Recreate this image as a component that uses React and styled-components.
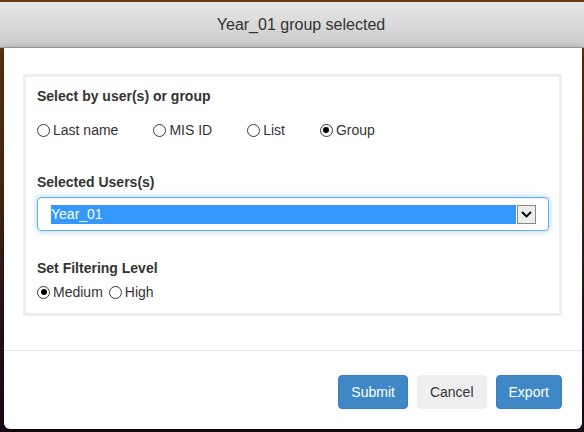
import React from 'react'
import styled, { createGlobalStyle } from 'styled-components'

const GlobalStyle = createGlobalStyle`
	html, body {
		margin: 0;
		padding: 0;
	}
	body {
		font-family: 'Liberation Sans', Arial, sans-serif;
		color: #333;
		background: linear-gradient(180deg, #6b3a10 0%, #4d2a16 45%, #2a1220 75%, #1c0a18 100%);
	}
`

const Screen = styled.div`
	width: 584px;
	height: 432px;
	padding-top: 2px;
	box-sizing: border-box;
	overflow: hidden;
`
const Dialog = styled.div`
	display: flex;
	flex-direction: column;
	height: 427px;
`
const Header = styled.div`
	display: flex;
	align-items: center;
	justify-content: center;
	height: 45px;
	padding-left: 18px;
	background: linear-gradient(180deg, #e5e5e5 0%, #dadada 50%, #c9c9c9 100%);
	border-bottom: 1px solid #a3a3a3;
	font-size: 16px;
	color: #333;
`
const Content = styled.div`
	flex: 1;
	display: flex;
	flex-direction: column;
	margin: 0 2px 0 4px;
	background: #fff;
	border-radius: 0 0 6px 6px;
	box-shadow: 0 3px 9px rgba(0, 0, 0, 0.5);
`
const Body = styled.div`
	padding: 26px 20px 34px 19px;
`
const Panel = styled.div`
	border: 3px solid #eee;
	padding: 9px 10px 11px 11px;
	display: flex;
	flex-direction: column;
`
const FieldLabel = styled.div`
	font-weight: bold;
	font-size: 14px;
	line-height: 20px;
	margin-top: ${p => p.$top || 0}px;
`
const RadioRow = styled.div`
	display: flex;
	align-items: center;
	gap: ${p => p.$gap}px;
	height: 20px;
	margin-top: ${p => p.$top}px;
	font-size: 14px;
`
const Option = styled.label`
	display: inline-flex;
	align-items: center;
	gap: 3px;
	line-height: 20px;
`
const Dot = styled.span`
	position: relative;
	width: 11px;
	height: 11px;
	border: 1px solid #3a3a3a;
	border-radius: 50%;
	background: #fff;
	box-sizing: content-box;
	&::after {
		content: '';
		display: ${p => (p.$on ? 'block' : 'none')};
		position: absolute;
		left: 2.5px;
		top: 2.5px;
		width: 6px;
		height: 6px;
		border-radius: 50%;
		background: #000;
	}
`
const SelectBox = styled.div`
	display: flex;
	align-items: center;
	height: 34px;
	box-sizing: border-box;
	margin-top: 5px;
	padding: 6px 12px 6px 13px;
	border: 1px solid #66afe9;
	border-radius: 4px;
	box-shadow: inset 0 1px 1px rgba(0, 0, 0, 0.075), 0 0 6px rgba(102, 175, 233, 0.6);
`
const Chosen = styled.div`
	flex: 1;
	height: 19px;
	line-height: 19px;
	background: #3399ff;
	color: #fff;
	font-size: 14px;
`
const ArrowBox = styled.div`
	width: 17px;
	height: 17px;
	margin-left: 1px;
	border: 1px solid #8a8a8a;
	background: #ececec;
	display: flex;
	align-items: center;
	justify-content: center;
`
const Footer = styled.div`
	display: flex;
	justify-content: flex-end;
	gap: 9px;
	padding: 24px 20px 19px;
	border-top: 1px solid #e5e5e5;
`
const Button = styled.button`
	height: 34px;
	padding: 6px 12px;
	font-family: 'Liberation Sans', Arial, sans-serif;
	font-size: 14px;
	line-height: 20px;
	border-radius: 4px;
	border: 1px solid ${p => (p.$primary ? '#3a83c3' : '#eeeeee')};
	background: ${p => (p.$primary ? '#3f88c8' : '#efefef')};
	color: ${p => (p.$primary ? '#fff' : '#333')};
	cursor: pointer;
`

const Radio = ({ label, on }) => (
	<Option>
		<Dot $on={on} />
		{label}
	</Option>
)

const App = () => {
	return (
		<Screen>
			<GlobalStyle />
			<Dialog>
				<Header>Year_01 group selected</Header>
				<Content>
					<Body>
						<Panel>
							<FieldLabel>Select by user(s) or group</FieldLabel>
							<RadioRow $top={14} $gap={35}>
								<Radio label="Last name" />
								<Radio label="MIS ID" />
								<Radio label="List" />
								<Radio label="Group" on />
							</RadioRow>
							<FieldLabel $top={32}>Selected Users(s)</FieldLabel>
							<SelectBox>
								<Chosen>Year_01</Chosen>
								<ArrowBox>
									<svg width="11" height="7" viewBox="0 0 11 7">
										<path d="M1 1l4.5 4.5L10 1" fill="none" stroke="#000" strokeWidth="1.8" />
									</svg>
								</ArrowBox>
							</SelectBox>
							<FieldLabel $top={27}>Set Filtering Level</FieldLabel>
							<RadioRow $top={4} $gap={6}>
								<Radio label="Medium" on />
								<Radio label="High" />
							</RadioRow>
						</Panel>
					</Body>
					<Footer>
						<Button $primary>Submit</Button>
						<Button>Cancel</Button>
						<Button $primary>Export</Button>
					</Footer>
				</Content>
			</Dialog>
		</Screen>
	)
}

export default App
